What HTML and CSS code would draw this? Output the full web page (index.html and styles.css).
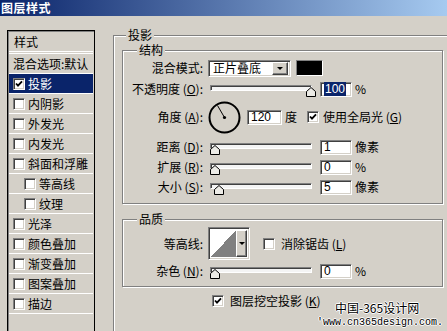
FILE: index.html
```html
<!DOCTYPE html>
<html lang="zh-CN">
<head>
    <meta charset="UTF-8">
    <title>图层样式</title>
    <link rel="stylesheet" href="styles.css">
</head>
<body>
    <div class="titlebar">图层样式</div>
    <div class="main">
        <div class="style-list">
            <div class="list-head">样式</div>
            <div class="list-item">混合选项:默认</div>
            <div class="list-item selected"><span class="check"><svg viewBox="0 0 8 8"><path d="M1 3.5 L3 5.7 L7 1.3"/></svg></span>投影</div>
            <div class="list-item"><span class="check"></span>内阴影</div>
            <div class="list-item"><span class="check"></span>外发光</div>
            <div class="list-item"><span class="check"></span>内发光</div>
            <div class="list-item"><span class="check"></span>斜面和浮雕</div>
            <div class="list-item sub"><span class="check"></span>等高线</div>
            <div class="list-item sub"><span class="check"></span>纹理</div>
            <div class="list-item"><span class="check"></span>光泽</div>
            <div class="list-item"><span class="check"></span>颜色叠加</div>
            <div class="list-item"><span class="check"></span>渐变叠加</div>
            <div class="list-item"><span class="check"></span>图案叠加</div>
            <div class="list-item"><span class="check"></span>描边</div>
        </div>

        <div class="group outer">
            <span class="group-title outer-title">投影</span>

            <div class="group inner">
                <span class="group-title">结构</span>
                <div class="row">
                    <span class="label">混合模式:</span>
                    <div class="select sunken">
                        <span class="select-text">正片叠底</span>
                        <span class="drop-btn"><i class="arrow"></i></span>
                    </div>
                    <span class="swatch"></span>
                </div>
                <div class="row row-gap1">
                    <span class="label">不透明度 (<u>O</u>):</span>
                    <div class="slider"><div class="track"></div><svg class="thumb" style="left: 96px" viewBox="0 0 10 10"><polygon points="0.5,4.5 5,0.5 9.5,4.5 9.5,9.5 0.5,9.5"/></svg></div>
                    <span class="num sunken"><span class="sel">100</span></span>
                    <span class="unit">%</span>
                </div>
                <div class="row row-angle">
                    <span class="label">角度 (<u>A</u>):</span>
                    <svg class="dial" viewBox="0 0 33 33">
                        <circle cx="16.5" cy="16.5" r="15" fill="none" stroke="#000" stroke-width="2"/>
                        <line x1="16.5" y1="16.5" x2="9.5" y2="4.5" stroke="#000" stroke-width="1"/>
                        <circle cx="16.5" cy="16.5" r="1.6" fill="#000"/>
                    </svg>
                    <span class="num num-angle sunken">120</span>
                    <span class="unit">度</span>
                    <span class="check check-global"><svg viewBox="0 0 8 8"><path d="M1 3.5 L3 5.7 L7 1.3"/></svg></span>
                    <span class="check-text">使用全局光 (<u>G</u>)</span>
                </div>
                <div class="row row-gap3">
                    <span class="label">距离 (<u>D</u>):</span>
                    <div class="slider"><div class="track"></div><svg class="thumb" style="left: 0px" viewBox="0 0 10 10"><polygon points="0.5,4.5 5,0.5 9.5,4.5 9.5,9.5 0.5,9.5"/></svg></div>
                    <span class="num sunken">1</span>
                    <span class="unit">像素</span>
                </div>
                <div class="row">
                    <span class="label">扩展 (<u>R</u>):</span>
                    <div class="slider"><div class="track"></div><svg class="thumb" style="left: 0px" viewBox="0 0 10 10"><polygon points="0.5,4.5 5,0.5 9.5,4.5 9.5,9.5 0.5,9.5"/></svg></div>
                    <span class="num sunken">0</span>
                    <span class="unit">%</span>
                </div>
                <div class="row">
                    <span class="label">大小 (<u>S</u>):</span>
                    <div class="slider"><div class="track"></div><svg class="thumb" style="left: 4px" viewBox="0 0 10 10"><polygon points="0.5,4.5 5,0.5 9.5,4.5 9.5,9.5 0.5,9.5"/></svg></div>
                    <span class="num sunken">5</span>
                    <span class="unit">像素</span>
                </div>
            </div>

            <div class="group inner quality">
                <span class="group-title">品质</span>
                <div class="row row-contour">
                    <span class="label">等高线:</span>
                    <div class="contour sunken">
                        <span class="contour-preview"></span>
                        <span class="drop-btn contour-btn"><i class="arrow"></i></span>
                    </div>
                    <span class="check check-aa"></span>
                    <span class="check-text">消除锯齿 (<u>L</u>)</span>
                </div>
                <div class="row row-gap1">
                    <span class="label">杂色 (<u>N</u>):</span>
                    <div class="slider"><div class="track"></div><svg class="thumb" style="left: 0px" viewBox="0 0 10 10"><polygon points="0.5,4.5 5,0.5 9.5,4.5 9.5,9.5 0.5,9.5"/></svg></div>
                    <span class="num sunken">0</span>
                    <span class="unit">%</span>
                </div>
            </div>

            <div class="knockout">
                <span class="check"><svg viewBox="0 0 8 8"><path d="M1 3.5 L3 5.7 L7 1.3"/></svg></span>
                <span class="check-text">图层挖空投影 (<u>K</u>)</span>
            </div>
        </div>
    </div>

    <div class="watermark">
        <div class="wm-cn">中国-365设计网</div>
        <div class="wm-url">'www.cn365design.com.</div>
    </div>
</body>
</html>
```

FILE: styles.css
```css
* { margin: 0; padding: 0; box-sizing: border-box; }
body { width: 447px; height: 331px; overflow: hidden; position: relative; background: #d4d0c8; font-family: "Noto Sans CJK SC", sans-serif; font-size: 12px; line-height: 1; color: #000; }
u { text-decoration: underline; text-underline-offset: 1px; }

.titlebar { height: 16px; padding: 1px 0 0 1px; background: linear-gradient(90deg, #0a246a, #a6caf0); color: #fff; font-size: 12px; font-weight: bold; letter-spacing: 0.5px; line-height: 14px; }

.main { display: flex; align-items: flex-start; gap: 18px; padding: 14px 0 0 7px; }

/* left style list */
.style-list { flex-shrink: 0; width: 88px; height: 301px; padding: 1px 1px 0; border: 1px solid #000; border-bottom: none; box-shadow: inset 1px 1px 0 #808080; }
.list-head { height: 22px; padding-left: 5px; border-bottom: 3px double #fff; line-height: 19px; }
.list-item { display: flex; align-items: center; height: 20px; padding-left: 4px; border-bottom: 1px solid #fff; white-space: nowrap; }
.list-item .check { margin-right: 3px; }
.list-item.sub { padding-left: 15px; }
.list-item.selected { background: #0a246a; color: #fff; }

/* checkbox */
.check { display: inline-flex; align-items: center; justify-content: center; flex-shrink: 0; width: 12px; height: 12px; background: #fff; border: 1px solid; border-color: #808080 #fff #fff #808080; box-shadow: inset 1px 1px 0 #404040, inset -1px -1px 0 #d4d0c8; }
.check svg { width: 8px; height: 8px; }
.check path { fill: none; stroke: #000; stroke-width: 1.8; }

/* group boxes */
.group { position: relative; border: 1px solid #808080; box-shadow: 1px 1px 0 #fff, inset 1px 1px 0 #fff; }
.group-title { position: absolute; top: -8px; left: 14px; padding: 0 2px; background: #d4d0c8; line-height: 14px; }
.outer-title { left: 12px; }
.outer { width: 334px; height: 296px; margin-top: 5px; padding: 14px 0 0 8px; border-right: none; border-bottom: none; box-shadow: inset 1px 1px 0 #fff; }
.inner { width: 321px; padding: 7px 0 6px; }
.quality { margin-top: 15px; padding-bottom: 5px; }

/* rows */
.row { display: flex; align-items: center; height: 20px; white-space: nowrap; }
.row-gap1 { margin-top: 1px; }
.row-gap3 { margin-top: 3px; }
.row-angle { height: 34px; margin-top: 1px; }
.row-contour { height: 33px; }
.label { width: 80px; text-align: right; }

.sunken { border: 1px solid; border-color: #808080 #fff #fff #808080; box-shadow: inset 1px 1px 0 #404040, inset -1px -1px 0 #d4d0c8; background: #fff; }

.select { display: flex; align-items: center; width: 83px; height: 17px; margin-left: 5px; padding: 2px; }
.select-text { flex: 1; padding-left: 2px; }
.drop-btn { display: flex; align-items: center; justify-content: center; width: 16px; height: 13px; background: #d4d0c8; border: 1px solid; border-color: #fff #404040 #404040 #fff; box-shadow: inset -1px -1px 0 #808080; }
.arrow { width: 0; height: 0; border-left: 3px solid transparent; border-right: 3px solid transparent; border-top: 3px solid #000; }
.swatch { width: 27px; height: 16px; margin-left: 5px; background: #000; border: 1px solid; border-color: #808080 #fff #fff #808080; }

.slider { position: relative; width: 102px; height: 15px; margin-left: 7px; }
.track { height: 6px; margin-top: 3px; background: #f4f4f4; border: 1px solid; border-color: #808080 #fff #fff #808080; box-shadow: inset 1px 1px 0 #404040; }
.thumb { position: absolute; top: 5px; width: 10px; height: 10px; }
.thumb polygon { fill: #ecebe6; stroke: #000; stroke-width: 1; }

.num { width: 32px; height: 15px; margin-left: 8px; padding-left: 3px; font-family: "Liberation Sans", sans-serif; line-height: 13px; }
.num .sel { background: #0a246a; color: #fff; padding: 0 1px; }
.unit { margin-left: 3px; }

.dial { width: 33px; height: 33px; margin-left: 5px; }
.num-angle { width: 35px; margin-left: 6px; }
.check-global { margin-left: 10px; }
.check-text { margin-left: 4px; }

.contour { display: flex; width: 42px; height: 33px; margin-left: 5px; padding: 2px; }
.contour-preview { flex: 1; background: linear-gradient(to top left, #808080 50%, #fff 50%); }
.contour-btn { width: 11px; height: 100%; }
.check-aa { margin-left: 13px; }
.row-contour .check-text { margin-left: 6px; }

.knockout { display: flex; align-items: center; margin: 8px 0 0 90px; white-space: nowrap; }
.knockout .check-text { margin-left: 6px; }

/* watermark overlay */
.watermark { position: absolute; left: 317px; top: 300px; color: #000; text-shadow: 1px 0 #fff, -1px 0 #fff, 0 1px #fff, 0 -1px #fff; }
.wm-cn { height: 16px; padding-left: 18px; font-size: 12px; line-height: 16px; }
.wm-url { font-family: "Liberation Mono", monospace; font-size: 10px; line-height: 13px; }
```
